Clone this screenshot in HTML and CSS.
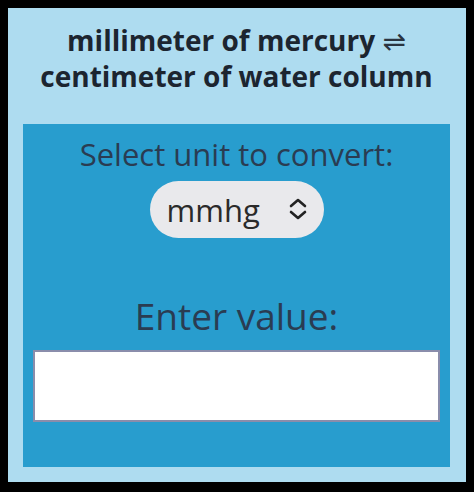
FILE: index.html
```html
<!DOCTYPE html>
<html lang="en">
<head>
    <meta charset="UTF-8">
    <meta name="viewport" content="width=device-width, initial-scale=1.0">
    <title>mmHg to cmH2O</title>
    <link rel="stylesheet" href="styles.css">
</head>
<body>
    <div class="panel">
        <h1>millimeter of mercury <span class="swap">⇌</span><br>centimeter of water column</h1>
        <div class="converter">
            <label for="unit">Select unit to convert:</label>
            <div class="select-wrap">
                <select id="unit">
                    <option value="mmhg">mmhg</option>
                    <option value="cmh2o">cmh2o</option>
                </select>
                <svg class="chevrons" width="20" height="24" viewBox="0 0 20 24">
                    <path d="M3 9 L10 3 L17 9 M3 15 L10 21 L17 15" fill="none" stroke="#222" stroke-width="2.6" stroke-linecap="round" stroke-linejoin="round"/>
                </svg>
            </div>
            <label for="value" class="big">Enter value:</label>
            <input type="text" id="value">
        </div>
    </div>
</body>
</html>
```

FILE: styles.css
```css
html, body {
    background: #000;
}
body {
    margin: 8px;
    font-family: "Open Sans", Arial, sans-serif;
}
.panel {
    width: 458px;
    height: 474px;
    box-sizing: border-box;
    background: #aedcf0;
    padding: 15px 16px 15px 15px;
    display: flex;
    flex-direction: column;
}
h1 {
    margin: 0 0 30px;
    font-size: 28px;
    line-height: 35px;
    font-weight: 700;
    text-align: center;
    color: #1c2530;
}
.swap {
    font-family: "DejaVu Sans", sans-serif;
    font-weight: 400;
    font-size: 28px;
    color: #2a3440;
}
.converter {
    flex: 1;
    background: #289dce;
    padding: 10px 10px 0;
    display: flex;
    flex-direction: column;
    align-items: center;
    color: #2a3c52;
}
label {
    font-size: 31px;
    line-height: 40px;
}
label.big {
    font-size: 37px;
    line-height: 48px;
    margin-top: 54px;
}
.select-wrap {
    position: relative;
    margin-top: 7px;
}
select {
    appearance: none;
    -webkit-appearance: none;
    width: 174px;
    height: 57px;
    border: none;
    border-radius: 29px;
    background: #e9e9ec;
    padding: 0 0 0 17px;
    font-family: "Open Sans", Arial, sans-serif;
    font-size: 31px;
    color: #2a2a2a;
}
.chevrons {
    position: absolute;
    right: 16px;
    top: 16px;
    pointer-events: none;
}
input[type="text"] {
    margin-top: 10px;
    width: 100%;
    height: 72px;
    box-sizing: border-box;
    border: 2px solid #8a8dab;
    background: #fff;
}
```
